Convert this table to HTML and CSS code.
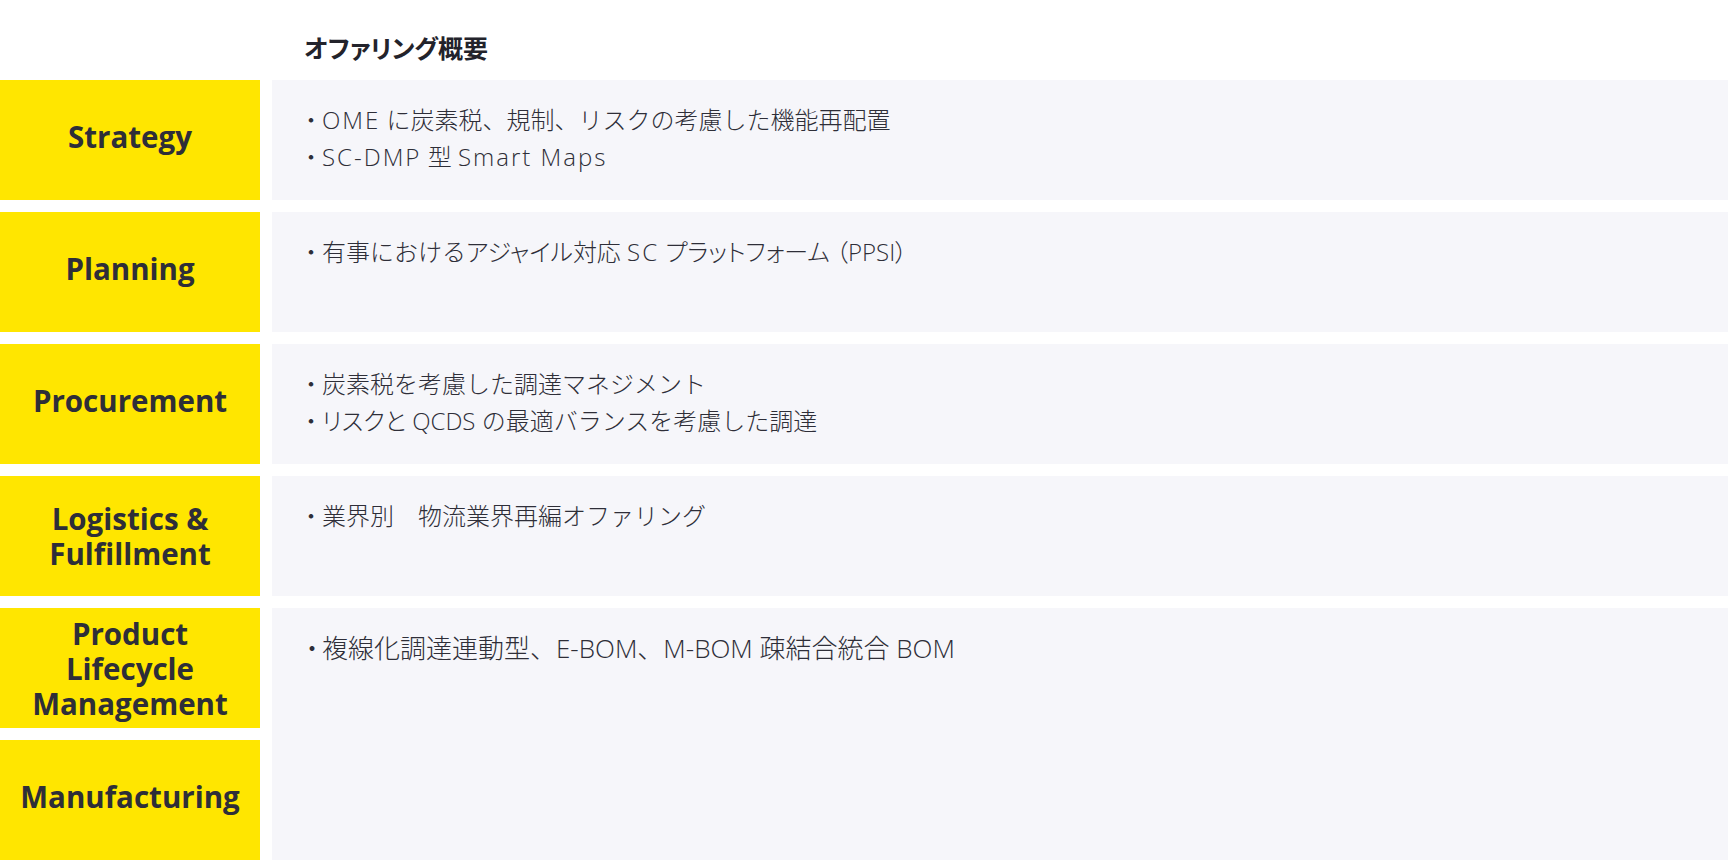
FILE: index.html
```html
<!DOCTYPE html>
<html lang="ja">
<head>
<meta charset="utf-8">
<title>オファリング概要</title>
<link rel="stylesheet" href="styles.css">
</head>
<body>
<main class="sheet">
  <div class="corner"></div>
  <h1 class="title">オファリング概要</h1>

  <div class="label">Strategy</div>
  <div class="content">
    <p><span class="dot">・</span><span class="en">OME</span> に炭素税、規制、リスクの考慮した機能再配置</p>
    <p><span class="dot">・</span><span class="en">SC-DMP</span> 型 <span class="en">Smart Maps</span></p>
  </div>

  <div class="label">Planning</div>
  <div class="content">
    <p><span class="dot">・</span>有事における<span class="pt">アジャイル</span>対応 <span class="en">SC</span> <span class="pt">プラットフォーム</span> <span class="pt">（PPSI）</span></p>
  </div>

  <div class="label">Procurement</div>
  <div class="content">
    <p><span class="dot">・</span>炭素税を考慮した調達マネジメント</p>
    <p><span class="dot">・</span><span class="pt">リスクと</span> QCDS の最適バランスを考慮した調達</p>
  </div>

  <div class="label multi"><span class="ln">Logistics &amp;</span><span class="ln">Fulfillment</span></div>
  <div class="content">
    <p><span class="dot">・</span>業界別　物流業界再編オファリング</p>
  </div>

  <div class="label multi"><span class="ln">Product</span><span class="ln">Lifecycle</span><span class="ln">Management</span></div>
  <div class="content span2">
    <p class="big"><span class="dot">・</span>複線化調達連動型、E-BOM、M-BOM 疎結合統合 BOM</p>
  </div>

  <div class="label"><span class="ln">Manufacturing</span></div>
</main>
</body>
</html>
```

FILE: styles.css
```css
html, body {
  margin: 0;
  padding: 0;
  background: #ffffff;
  overflow: hidden;
}

.sheet {
  display: grid;
  grid-template-columns: 260px 1fr;
  grid-template-rows: 68px repeat(6, 120px);
  gap: 12px;
  width: 1728px;
  height: 860px;
  color: #2e2e38;
}

.title {
  margin: 0;
  padding: 32px 0 0 32px;
  font-family: "Noto Sans CJK JP", sans-serif;
  font-feature-settings: "palt";
  font-size: 25px;
  line-height: 30px;
  font-weight: 700;
  color: #23232b;
}

.label {
  background: #ffe600;
  display: flex;
  flex-direction: column;
  align-items: center;
  justify-content: center;
  text-align: center;
  padding-bottom: 8px;
  box-sizing: border-box;
  font-family: "Open Sans", "Liberation Sans", sans-serif;
  font-weight: 700;
  font-size: 29.5px;
  line-height: 35px;
  color: #2e2e38;
}

.label.multi {
  padding-bottom: 0;
}

.ln {
  display: block;
  height: 35px;
  overflow: visible;
  white-space: nowrap;
}

.content {
  background: #f6f6fa;
  padding: 21px 32px 0;
  font-family: "Open Sans", "Noto Sans CJK JP", sans-serif;
  font-weight: 300;
  font-size: 24px;
  line-height: 36px;
  color: #2e2e38;
}

.content p {
  margin: 0;
}

.content .big {
  font-size: 26px;
}

.en {
  letter-spacing: 2px;
}

.pt {
  font-feature-settings: "palt";
}

.dot {
  display: inline-block;
  width: 23px;
  margin-left: -5px;
  font-family: "Noto Sans CJK JP", sans-serif;
}

.span2 {
  grid-row: span 2;
}
```
